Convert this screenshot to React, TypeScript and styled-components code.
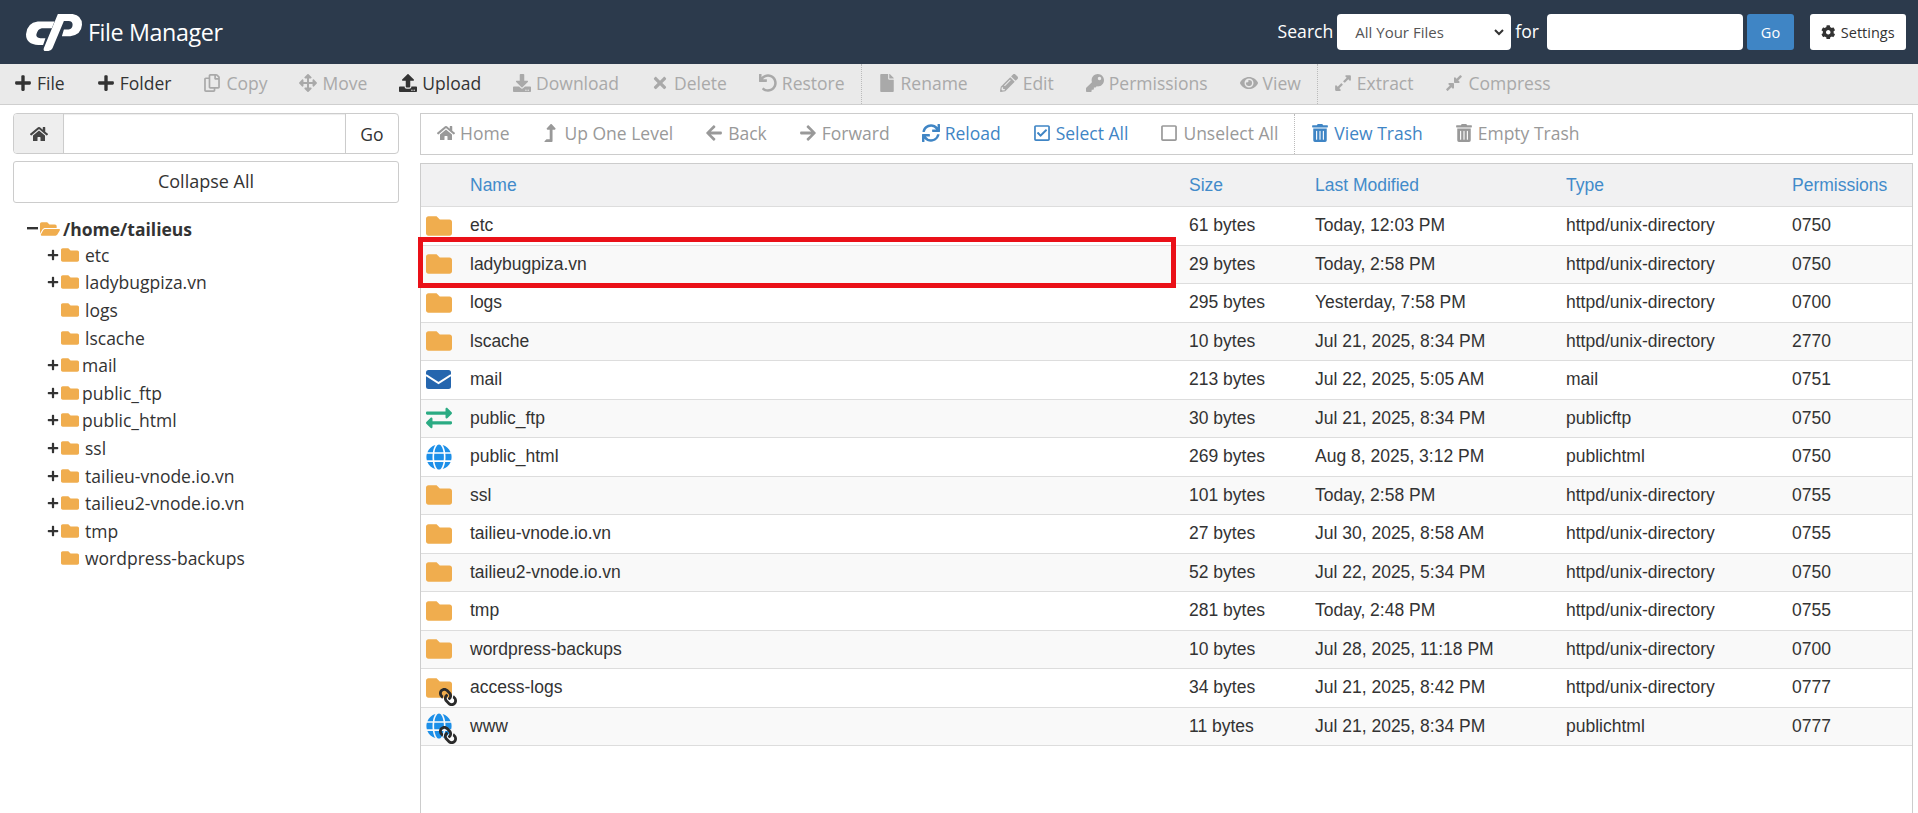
import * as React from 'react';
import styled, { createGlobalStyle } from 'styled-components';
import {
  FaArrowLeft,
  FaArrowRight,
  FaArrowsAlt,
  FaCog,
  FaCompressAlt,
  FaDownload,
  FaExchangeAlt,
  FaExpandAlt,
  FaEye,
  FaFile,
  FaFolder,
  FaFolderOpen,
  FaGlobe,
  FaHome,
  FaKey,
  FaLevelUpAlt,
  FaLink,
  FaPencilAlt,
  FaPlus,
  FaRegCheckSquare,
  FaRegCopy,
  FaRegSquare,
  FaSync,
  FaTimes,
  FaTrashAlt,
  FaUndo,
  FaUpload,
} from 'react-icons/fa';

const GlobalStyle = createGlobalStyle`
  html, body {
    margin: 0;
    height: 100%;
    background: #fff;
  }
  #root {
    height: 100%;
  }
  * {
    box-sizing: border-box;
  }
`;

const uiFont = `"Open Sans", "Liberation Sans", sans-serif`;
const tableFont = `"Liberation Sans", Arial, sans-serif`;

const Page = styled.div`
  height: 813px;
  overflow: hidden;
  display: flex;
  flex-direction: column;
  font-family: ${uiFont};
  color: #333;
`;

const Header = styled.header`
  height: 64px;
  flex: none;
  background: #2c3a4c;
  display: flex;
  align-items: center;
  padding: 0 12px 0 26px;
`;

const Brand = styled.div`
  display: flex;
  align-items: center;
  gap: 6px;
  color: #fff;
  font-size: 23.3px;
  letter-spacing: -0.4px;
`;

const SearchForm = styled.div`
  margin-left: auto;
  display: flex;
  align-items: center;
  color: #fff;
  font-size: 17.6px;
`;

const SearchLabel = styled.span`
  margin: 0 4px 3px 0;
`;

const SelectBox = styled.div`
  width: 174px;
  height: 36px;
  background: #fff;
  border-radius: 4px;
  color: #555;
  font-size: 15px;
  display: flex;
  align-items: center;
  justify-content: space-between;
  padding: 0 6px 0 18px;
  margin-right: 4px;
`;

const SearchInput = styled.div`
  width: 196px;
  height: 36px;
  background: #fff;
  border-radius: 4px;
  margin: 0 4px;
`;

const GoButton = styled.div`
  width: 47px;
  height: 36px;
  background: #3f85c5;
  border-radius: 3px;
  color: #fff;
  font-size: 14.5px;
  display: flex;
  align-items: center;
  justify-content: center;
`;

const SettingsButton = styled.div`
  width: 96px;
  height: 36px;
  margin-left: 16px;
  background: #fff;
  border-radius: 3px;
  color: #333;
  font-size: 14.5px;
  display: flex;
  align-items: center;
  justify-content: center;
  gap: 5px;
`;

const Toolbar = styled.nav`
  height: 41px;
  flex: none;
  background: #eaeaea;
  border-bottom: 1px solid #cfcfcf;
  display: flex;
  align-items: stretch;
`;

const ToolGroup = styled.div<{ $divider?: boolean }>`
  display: flex;
  align-items: center;
  padding-bottom: 2px;
  ${(p) => (p.$divider ? 'border-right: 1px dotted #bbb;' : '')}
  &:first-child {
    margin-left: -2px;
  }
`;

const ToolButton = styled.span<{ $off?: boolean }>`
  display: inline-flex;
  align-items: center;
  gap: 5px;
  padding: 0 16px;
  font-size: 17.5px;
  white-space: nowrap;
  color: ${(p) => (p.$off ? '#a9a9a9' : '#333')};
  svg {
    font-size: 18px;
  }
`;

const Body = styled.div`
  flex: 1;
  min-height: 0;
  display: flex;
`;

const Sidebar = styled.aside`
  width: 420px;
  flex: none;
  padding: 8px 21px 0 13px;
`;

const PathGroup = styled.div`
  height: 41px;
  display: flex;
  border: 1px solid #ccc;
  border-radius: 4px;
  overflow: hidden;
`;

const PathHome = styled.div`
  width: 50px;
  background: #eee;
  border-right: 1px solid #ccc;
  display: flex;
  align-items: center;
  justify-content: center;
  color: #444;
  font-size: 18px;
`;

const PathField = styled.div`
  flex: 1;
  box-shadow: inset 0 1px 1px rgba(0, 0, 0, 0.075);
`;

const PathGo = styled.div`
  width: 53px;
  border-left: 1px solid #ccc;
  display: flex;
  align-items: center;
  justify-content: center;
  font-size: 17.5px;
`;

const CollapseButton = styled.div`
  height: 42px;
  margin-top: 7px;
  padding-bottom: 2px;
  border: 1px solid #ccc;
  border-radius: 3px;
  display: flex;
  align-items: center;
  justify-content: center;
  font-size: 18px;
`;

const Tree = styled.ul`
  list-style: none;
  margin: 13px 0 0;
  padding: 0;
  font-size: 17.5px;
`;

const TreeRow = styled.li<{ $root?: boolean }>`
  height: ${(p) => (p.$root ? '25px' : '27.6px')};
  display: flex;
  align-items: center;
  padding-left: ${(p) => (p.$root ? '11px' : '32px')};
  font-weight: ${(p) => (p.$root ? 700 : 400)};
  white-space: nowrap;
`;

const TreeToggle = styled.span`
  width: 16px;
  flex: none;
  display: flex;
  align-items: center;
  justify-content: center;
  font-size: 12px;
  color: #333;
`;

const TreeFolder = styled.span<{ $tight?: boolean; $root?: boolean }>`
  display: inline-flex;
  color: #f0ad4e;
  font-size: ${(p) => (p.$root ? '20px' : '18px')};
  margin-right: ${(p) => (p.$tight ? '3px' : '6px')};
`;

const Main = styled.main`
  flex: 1;
  min-width: 0;
  padding: 8px 5px 0 0;
  display: flex;
  flex-direction: column;
`;

const NavBar = styled.div`
  height: 42px;
  flex: none;
  border: 1px solid #ccc;
  display: flex;
  align-items: stretch;
`;

const NavGroup = styled.div<{ $divider?: boolean }>`
  display: flex;
  align-items: center;
  padding-bottom: 2px;
  ${(p) => (p.$divider ? 'border-right: 1px dotted #bbb;' : '')}
`;

const NavButton = styled.span<{ $on?: boolean }>`
  display: inline-flex;
  align-items: center;
  gap: 5px;
  padding: 0 16px;
  font-size: 17.5px;
  white-space: nowrap;
  color: ${(p) => (p.$on ? '#3f85c5' : '#999')};
  svg {
    font-size: 18px;
  }
`;

const FilePanel = styled.section`
  flex: 1;
  margin-top: 8px;
  border: 1px solid #ccc;
  border-bottom: none;
  position: relative;
  font-family: ${tableFont};
  font-size: 17.5px;
`;

const columns = '49px 719px 126px 251px 226px 1fr';

const HeadRow = styled.div`
  height: 43px;
  display: grid;
  grid-template-columns: ${columns};
  align-items: center;
  background: #f1f1f2;
  border-bottom: 1px solid #ddd;
  color: #428bca;
`;

const FileRow = styled.div<{ $shade?: boolean }>`
  height: 38.5px;
  display: grid;
  grid-template-columns: ${columns};
  align-items: center;
  background: ${(p) => (p.$shade ? '#f9f9f9' : '#fff')};
  border-bottom: 1px solid #ddd;
  &:last-of-type {
    border-bottom: none;
  }
`;

const IconCell = styled.div`
  position: relative;
  padding-left: 5px;
  display: flex;
  align-items: center;
  font-size: 26px;
`;

const LinkBadge = styled.span`
  position: absolute;
  left: 18px;
  top: 13px;
  display: flex;
  font-size: 18px;
  color: #2b2b2b;
  transform: scaleX(-1);
`;

const Callout = styled.div`
  position: absolute;
  left: -3px;
  top: 73px;
  width: 758px;
  height: 51px;
  border: 5px solid #ea1018;
  pointer-events: none;
`;

const CpanelLogo = () => (
  <svg width="56" height="37" viewBox="33 28 167 110" fill="#fff" aria-label="cPanel">
    <path d="M118 50 L68 50 Q36 54 33 88 Q33 118 70 120 L84 120 L91 100 L76 100 Q62 98 64 88 Q68 72 80 70 L110 70 Z" />
    <path d="M128 28 L172 28 Q200 32 200 60 Q198 90 165 94 L140 94 L146 74 L160 74 Q172 72 172 60 Q172 50 160 49 L146 49 L112 130 Q108 138 100 138 L88 138 Q84 136 86 130 Z" />
  </svg>
);

const EnvelopeIcon = () => (
  <svg width="25" height="19" viewBox="0 0 25 19">
    <rect width="25" height="19" rx="2.5" fill="#2566ae" />
    <path d="M0 5 L12.5 13 L25 5" fill="none" stroke="#fff" strokeWidth="2" />
  </svg>
);

type FileKind = 'folder' | 'mail' | 'ftp' | 'web';

interface FileEntry {
  name: string;
  size: string;
  modified: string;
  type: string;
  perms: string;
  kind: FileKind;
  link?: boolean;
}

const dir = 'httpd/unix-directory';

const files: FileEntry[] = [
  { name: 'etc', size: '61 bytes', modified: 'Today, 12:03 PM', type: dir, perms: '0750', kind: 'folder' },
  { name: 'ladybugpiza.vn', size: '29 bytes', modified: 'Today, 2:58 PM', type: dir, perms: '0750', kind: 'folder' },
  { name: 'logs', size: '295 bytes', modified: 'Yesterday, 7:58 PM', type: dir, perms: '0700', kind: 'folder' },
  { name: 'lscache', size: '10 bytes', modified: 'Jul 21, 2025, 8:34 PM', type: dir, perms: '2770', kind: 'folder' },
  { name: 'mail', size: '213 bytes', modified: 'Jul 22, 2025, 5:05 AM', type: 'mail', perms: '0751', kind: 'mail' },
  { name: 'public_ftp', size: '30 bytes', modified: 'Jul 21, 2025, 8:34 PM', type: 'publicftp', perms: '0750', kind: 'ftp' },
  { name: 'public_html', size: '269 bytes', modified: 'Aug 8, 2025, 3:12 PM', type: 'publichtml', perms: '0750', kind: 'web' },
  { name: 'ssl', size: '101 bytes', modified: 'Today, 2:58 PM', type: dir, perms: '0755', kind: 'folder' },
  { name: 'tailieu-vnode.io.vn', size: '27 bytes', modified: 'Jul 30, 2025, 8:58 AM', type: dir, perms: '0755', kind: 'folder' },
  { name: 'tailieu2-vnode.io.vn', size: '52 bytes', modified: 'Jul 22, 2025, 5:34 PM', type: dir, perms: '0750', kind: 'folder' },
  { name: 'tmp', size: '281 bytes', modified: 'Today, 2:48 PM', type: dir, perms: '0755', kind: 'folder' },
  { name: 'wordpress-backups', size: '10 bytes', modified: 'Jul 28, 2025, 11:18 PM', type: dir, perms: '0700', kind: 'folder' },
  { name: 'access-logs', size: '34 bytes', modified: 'Jul 21, 2025, 8:42 PM', type: dir, perms: '0777', kind: 'folder', link: true },
  { name: 'www', size: '11 bytes', modified: 'Jul 21, 2025, 8:34 PM', type: 'publichtml', perms: '0777', kind: 'web', link: true },
];

const treeItems = [
  { name: 'etc', more: true },
  { name: 'ladybugpiza.vn', more: true },
  { name: 'logs', more: false },
  { name: 'lscache', more: false },
  { name: 'mail', more: true, tight: true },
  { name: 'public_ftp', more: true, tight: true },
  { name: 'public_html', more: true, tight: true },
  { name: 'ssl', more: true },
  { name: 'tailieu-vnode.io.vn', more: true },
  { name: 'tailieu2-vnode.io.vn', more: true },
  { name: 'tmp', more: true },
  { name: 'wordpress-backups', more: false },
];

const kindIcon = (kind: FileKind) => {
  switch (kind) {
    case 'mail':
      return <EnvelopeIcon />;
    case 'ftp':
      return <FaExchangeAlt color="#2bab83" />;
    case 'web':
      return <FaGlobe color="#1c8fe8" />;
    default:
      return <FaFolder color="#f0ad4e" />;
  }
};

const App = () => (
  <Page>
    <GlobalStyle />
    <Header>
      <Brand>
        <CpanelLogo />
        File Manager
      </Brand>
      <SearchForm>
        <SearchLabel>Search</SearchLabel>
        <SelectBox>
          All Your Files
          <svg width="12" height="12" viewBox="0 0 12 12" fill="none" stroke="#333" strokeWidth="2">
            <path d="M2 4 L6 8 L10 4" />
          </svg>
        </SelectBox>
        <SearchLabel>for</SearchLabel>
        <SearchInput />
        <GoButton>Go</GoButton>
        <SettingsButton>
          <FaCog />
          Settings
        </SettingsButton>
      </SearchForm>
    </Header>

    <Toolbar>
      <ToolGroup $divider>
        <ToolButton><FaPlus />File</ToolButton>
        <ToolButton><FaPlus />Folder</ToolButton>
        <ToolButton $off><FaRegCopy />Copy</ToolButton>
        <ToolButton $off><FaArrowsAlt />Move</ToolButton>
        <ToolButton><FaUpload />Upload</ToolButton>
        <ToolButton $off><FaDownload />Download</ToolButton>
        <ToolButton $off><FaTimes />Delete</ToolButton>
        <ToolButton $off><FaUndo />Restore</ToolButton>
      </ToolGroup>
      <ToolGroup $divider>
        <ToolButton $off><FaFile />Rename</ToolButton>
        <ToolButton $off><FaPencilAlt />Edit</ToolButton>
        <ToolButton $off><FaKey />Permissions</ToolButton>
        <ToolButton $off><FaEye />View</ToolButton>
      </ToolGroup>
      <ToolGroup>
        <ToolButton $off><FaExpandAlt />Extract</ToolButton>
        <ToolButton $off><FaCompressAlt />Compress</ToolButton>
      </ToolGroup>
    </Toolbar>

    <Body>
      <Sidebar>
        <PathGroup>
          <PathHome><FaHome /></PathHome>
          <PathField />
          <PathGo>Go</PathGo>
        </PathGroup>
        <CollapseButton>Collapse All</CollapseButton>
        <Tree>
          <TreeRow $root>
            <TreeToggle><svg width="11" height="3"><rect width="11" height="2.4" fill="#333" /></svg></TreeToggle>
            <TreeFolder $root $tight><FaFolderOpen /></TreeFolder>
            /home/tailieus
          </TreeRow>
          {treeItems.map((item) => (
            <TreeRow key={item.name}>
              <TreeToggle>{item.more && <FaPlus />}</TreeToggle>
              <TreeFolder $tight={item.tight}><FaFolder /></TreeFolder>
              {item.name}
            </TreeRow>
          ))}
        </Tree>
      </Sidebar>

      <Main>
        <NavBar>
          <NavGroup $divider>
            <NavButton><FaHome />Home</NavButton>
            <NavButton><FaLevelUpAlt />Up One Level</NavButton>
            <NavButton><FaArrowLeft />Back</NavButton>
            <NavButton><FaArrowRight />Forward</NavButton>
            <NavButton $on><FaSync />Reload</NavButton>
            <NavButton $on><FaRegCheckSquare />Select All</NavButton>
            <NavButton><FaRegSquare />Unselect All</NavButton>
          </NavGroup>
          <NavGroup>
            <NavButton $on><FaTrashAlt />View Trash</NavButton>
            <NavButton><FaTrashAlt />Empty Trash</NavButton>
          </NavGroup>
        </NavBar>

        <FilePanel>
          <HeadRow>
            <span />
            <span>Name</span>
            <span>Size</span>
            <span>Last Modified</span>
            <span>Type</span>
            <span>Permissions</span>
          </HeadRow>
          {files.map((file, i) => (
            <FileRow key={file.name} $shade={i % 2 === 1}>
              <IconCell>
                {kindIcon(file.kind)}
                {file.link && <LinkBadge><FaLink /></LinkBadge>}
              </IconCell>
              <span>{file.name}</span>
              <span>{file.size}</span>
              <span>{file.modified}</span>
              <span>{file.type}</span>
              <span>{file.perms}</span>
            </FileRow>
          ))}
          <Callout />
        </FilePanel>
      </Main>
    </Body>
  </Page>
);

export default App;
